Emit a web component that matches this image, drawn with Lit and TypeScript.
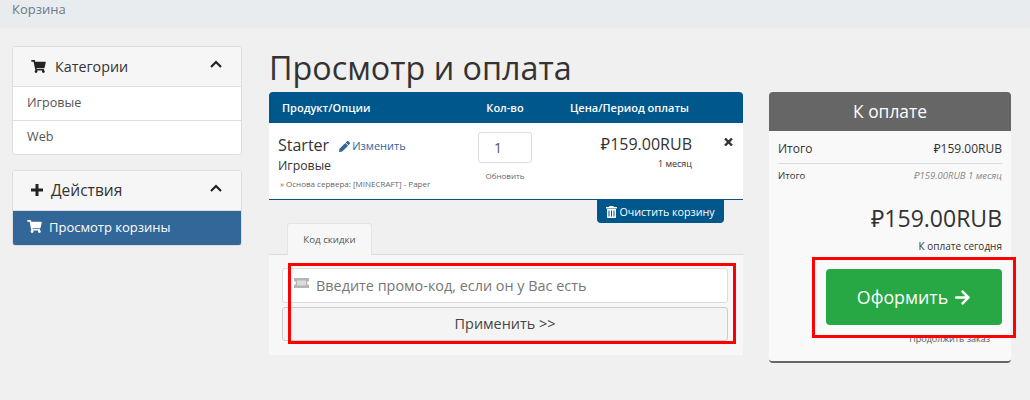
import { LitElement, html, css, svg } from "lit";
import { customElement } from "lit/decorators.js";

const cart = svg`<path d="M528.120 301.319l47.273-208C578.806 78.301 567.391 64 551.990 64H159.208l-9.166-44.810C147.758 8.021 137.930 0 126.529 0H24C10.745 0 0 10.745 0 24v16c0 13.255 10.745 24 24 24h69.883l70.248 343.435C147.325 417.100 136 435.222 136 456c0 30.928 25.072 56 56 56s56-25.072 56-56c0-15.674-6.447-29.835-16.824-40h209.647C430.447 426.165 424 440.326 424 456c0 30.928 25.072 56 56 56s56-25.072 56-56c0-22.172-12.888-41.332-31.579-50.405l5.517-24.276c3.413-15.018-8.002-29.319-23.403-29.319H218.117l-6.545-32h293.145c11.206 0 20.920-7.754 23.403-18.681z"/>`;

@customElement("app-root")
export class AppRoot extends LitElement {
  static styles = css`
    :host { display: block; width: 1030px; height: 400px; background: #f0f0f0; font-family: "Open Sans", "Noto Sans", sans-serif; color: #333; position: relative; overflow: hidden; font-size: 13px; }
    .crumb { height: 28px; background: #e9ecef; padding: 0 12px; color: #6c7a89; font-size: 13px; line-height: 18px; box-sizing: border-box; }
    .page { display: flex; padding: 18px 0 0 12px; }
    .side { width: 230px; flex: none; display: flex; flex-direction: column; gap: 15px; margin-right: 27px; }
    .card { background: #fff; border: 1px solid #ddd; border-radius: 3px; box-sizing: border-box; overflow: hidden; }
    .card-h { height: 40px; background: #f6f6f6; border-bottom: 1px solid #ddd; display: flex; align-items: center; padding: 0 19px 1px 18px; color: #333; box-sizing: border-box; }
    .card-h .t { flex: 1; margin-left: 9px; font-size: 14.300px; }
    .card-h .t.wide { margin-left: 8px; font-size: 15.500px; }
    .card-h svg { fill: #222; flex: none; }
    .chev { fill: none !important; stroke: #222; stroke-width: 2.200; margin-top: -4px; }
    .item { height: 33px; padding: 0 14px 3px; display: flex; align-items: center; font-size: 12.600px; color: #555; box-sizing: border-box; }
    .item + .item { border-top: 1px solid #ddd; height: 34px; }
    .item.active { background: #336699; color: #fff; gap: 7px; height: 34px; font-size: 13px; }
    .item.active svg { fill: #fff; }
    .main { width: 474px; flex: none; margin-right: 26px; }
    h1 { font-weight: 400; font-size: 32.300px; line-height: 42px; margin: 0 0 4px; color: #333; }
    .thead { height: 31px; background: #00578b; border-radius: 4px 4px 0 0; color: #fff; font-size: 11px; font-weight: 600; display: grid; grid-template-columns: 176px 94px 1fr; align-items: center; padding-left: 13px; }
    .thead .q { text-align: center; }
    .thead .p { padding-left: 18px; }
    .row { height: 77px; background: #fff; border-bottom: 1px solid #00578b; box-sizing: border-box; display: grid; grid-template-columns: 200px 54px 160px 1fr; padding-left: 9px; }
    .prod { padding-top: 9px; }
    .name { font-size: 16px; line-height: 24px; color: #333; display: flex; align-items: center; gap: 10px; }
    .edit { font-size: 11px; color: #336699; display: inline-flex; align-items: center; gap: 2px; padding-top: 2px; }
    .edit svg { fill: #336699; }
    .grp { font-size: 12.300px; line-height: 18px; margin-top: -1px; }
    .opt { font-size: 8px; line-height: 14px; color: #666; margin: 2px 0 0 2px; white-space: nowrap; }
    .qty { padding-top: 9px; text-align: center; }
    .qbox { width: 54px; height: 31px; background: #fff; border: 1px solid #ddd; border-radius: 3px; box-sizing: border-box; display: flex; align-items: center; justify-content: center; padding-right: 14px; font-size: 14px; color: #555; margin: 0 auto 7px; }
    .upd { font-size: 8px; color: #666; line-height: 12px; white-space: nowrap; }
    .price { text-align: right; padding-top: 9px; }
    .price .a { font-size: 16px; line-height: 24px; color: #333; }
    .price .b { font-size: 9px; line-height: 14px; margin-top: 1px; }
    .x { padding: 15px 0 0 32px; }
    .x svg { stroke: #333; stroke-width: 2.400; fill: none; display: block; }
    .clear-wrap { display: flex; justify-content: flex-end; padding-right: 19px; }
    .clear { width: 127px; height: 23px; background: #00578b; color: #fff; border-radius: 0 0 4px 4px; font-size: 10.700px; display: flex; align-items: center; justify-content: center; gap: 2px; white-space: nowrap; }
    .clear svg { fill: #fff; }
    .tabs { padding-left: 18px; border-bottom: 1px solid #ddd; height: 31px; }
    .tab { width: 85px; height: 32px; background: #f7f7f7; border: 1px solid #e4e4e4; border-bottom: 0; border-radius: 3px 3px 0 0; box-sizing: border-box; display: flex; align-items: center; justify-content: center; padding-bottom: 1px; font-size: 9.700px; color: #555; }
    .panel { background: #f7f7f7; height: 100px; padding: 13px 15px 0 13px; box-sizing: border-box; display: flex; flex-direction: column; gap: 4px; }
    .input { height: 35px; background: #fff; border: 1px solid #ddd; border-radius: 3px; box-sizing: border-box; display: flex; align-items: center; padding-left: 11px; gap: 7px; color: #777; font-size: 14.400px; }
    .input svg { margin-top: -6px; flex: none; }
    .apply { height: 34px; background: #f4f4f4; border: 1px solid #ccc; border-radius: 3px; box-sizing: border-box; display: flex; align-items: center; justify-content: center; padding-bottom: 2px; color: #444; font-size: 14.400px; }
    .sum { width: 242px; flex: none; height: 271px; margin-top: 46px; background: #f9f9f9; border-radius: 4px; border-bottom: 2px solid #666; box-sizing: border-box; overflow: hidden; }
    .sum-h { height: 39px; background: #666; color: #fff; font-size: 17.400px; display: flex; align-items: center; justify-content: center; padding-bottom: 2px; box-sizing: border-box; }
    .sum-b { padding: 0 9px; }
    .line { display: flex; justify-content: space-between; align-items: center; }
    .l1 { height: 33px; font-size: 12px; border-bottom: 1px solid #ddd; padding-top: 3px; box-sizing: border-box; color: #333; }
    .l2 { height: 23px; font-size: 9.500px; }
    .l2 i { color: #888; }
    .tot { text-align: right; font-size: 23px; line-height: 32px; margin-top: 15px; color: #333; }
    .today { text-align: right; font-size: 10px; line-height: 14px; margin-top: 5px; color: #333; }
    .go { height: 56px; margin: 16px 0 0 48px; background: #28a745; color: #fff; font-size: 17.800px; border-radius: 4px; display: flex; align-items: center; justify-content: center; gap: 6px; }
    .go svg { fill: #fff; }
    .cont { font-size: 9px; line-height: 14px; text-align: right; padding-right: 12px; margin-top: 7px; color: #555; }
    .mark { position: absolute; border: 3px solid #f00; box-sizing: border-box; pointer-events: none; }
    .m1 { left: 288px; top: 263px; width: 448px; height: 81px; }
    .m2 { left: 812px; top: 257px; width: 204px; height: 81px; }
  `;

  render() {
    return html`
      <div class="crumb">Корзина</div>
      <div class="page">
        <div class="side">
          <div class="card">
            <div class="card-h">
              <svg width="15" height="13" viewBox="0 0 576 512">${cart}</svg>
              <span class="t">Категории</span>
              <svg class="chev" width="12" height="8" viewBox="0 0 12 8"><path d="M1 7l5-5 5 5"/></svg>
            </div>
            <div class="item">Игровые</div>
            <div class="item">Web</div>
          </div>
          <div class="card">
            <div class="card-h">
              <svg width="12" height="12" viewBox="0 0 12 12"><path d="M4.500 0h3v4.500H12v3H7.500V12h-3V7.500H0v-3h4.500z"/></svg>
              <span class="t wide">Действия</span>
              <svg class="chev" width="12" height="8" viewBox="0 0 12 8"><path d="M1 7l5-5 5 5"/></svg>
            </div>
            <div class="item active">
              <svg width="15" height="13" viewBox="0 0 576 512">${cart}</svg>
              Просмотр корзины
            </div>
          </div>
        </div>
        <div class="main">
          <h1>Просмотр и оплата</h1>
          <div class="thead"><span>Продукт/Опции</span><span class="q">Кол-во</span><span class="p">Цена/Период оплаты</span></div>
          <div class="row">
            <div class="prod">
              <div class="name">Starter <span class="edit">
                <svg width="11" height="11" viewBox="0 0 512 512"><path d="M497.900 142.100l-46.100 46.100c-4.700 4.700-12.300 4.700-17 0l-111-111c-4.700-4.700-4.700-12.300 0-17l46.100-46.100c18.700-18.700 49.100-18.700 67.900 0l60.100 60.100c18.800 18.700 18.800 49.100 0 67.900zM284.200 99.800L21.600 362.400.4 483.900c-2.900 16.400 11.400 30.600 27.800 27.800l121.500-21.300 262.600-262.600c4.700-4.700 4.700-12.300 0-17l-111-111c-4.800-4.700-12.400-4.700-17.100 0z"/></svg>
                Изменить</span></div>
              <div class="grp">Игровые</div>
              <div class="opt">» Основа сервера: [MINECRAFT] - Paper</div>
            </div>
            <div class="qty">
              <div class="qbox">1</div>
              <div class="upd">Обновить</div>
            </div>
            <div class="price">
              <div class="a">₽159.00RUB</div>
              <div class="b">1 месяц</div>
            </div>
            <div class="x"><svg width="9" height="8" viewBox="0 0 9 8"><path d="M1 .5l7 7M8 .5l-7 7"/></svg></div>
          </div>
          <div class="clear-wrap">
            <div class="clear">
              <svg width="11" height="12" viewBox="0 0 11 12"><path d="M3.500 0h4l.5 1h3v1.500H0V1h3zM1 3h9v8c0 .6-.4 1-1 1H2c-.6 0-1-.4-1-1zm1.500 1.500V10.500h1V4.500zm2.500 0V10.500h1V4.500zm2.500 0V10.500h1V4.500z"/></svg>
              Очистить корзину
            </div>
          </div>
          <div class="tabs"><div class="tab">Код скидки</div></div>
          <div class="panel">
            <div class="input">
              <svg width="15" height="10" viewBox="0 0 15 10"><path fill="#b5b5b5" d="M0 0h15v3a2 2 0 0 0 0 4v3H0V7a2 2 0 0 0 0-4z"/><path fill="#d8dcdc" d="M3 2.500h9v5H3z"/></svg>
              Введите промо-код, если он у Вас есть
            </div>
            <div class="apply">Применить &gt;&gt;</div>
          </div>
        </div>
        <div class="sum">
          <div class="sum-h">К оплате</div>
          <div class="sum-b">
            <div class="line l1"><span>Итого</span><span>₽159.00RUB</span></div>
            <div class="line l2"><span>Итого</span><i>₽159.00RUB 1 месяц</i></div>
            <div class="tot">₽159.00RUB</div>
            <div class="today">К оплате сегодня</div>
            <div class="go">Оформить
              <svg width="17" height="17" viewBox="0 0 448 512"><path d="M190.500 66.900l22.200-22.200c9.400-9.400 24.600-9.400 33.900 0L441 239c9.400 9.400 9.400 24.600 0 33.900L246.600 467.300c-9.400 9.400-24.600 9.400-33.900 0l-22.200-22.200c-9.500-9.500-9.300-25 .4-34.300L311.400 296H24c-13.300 0-24-10.700-24-24v-32c0-13.300 10.700-24 24-24h287.400L190.900 101.200c-9.800-9.300-10-24.800-.4-34.300z"/></svg>
            </div>
            <div class="cont">Продолжить заказ</div>
          </div>
        </div>
      </div>
      <div class="mark m1"></div>
      <div class="mark m2"></div>
    `;
  }
}
